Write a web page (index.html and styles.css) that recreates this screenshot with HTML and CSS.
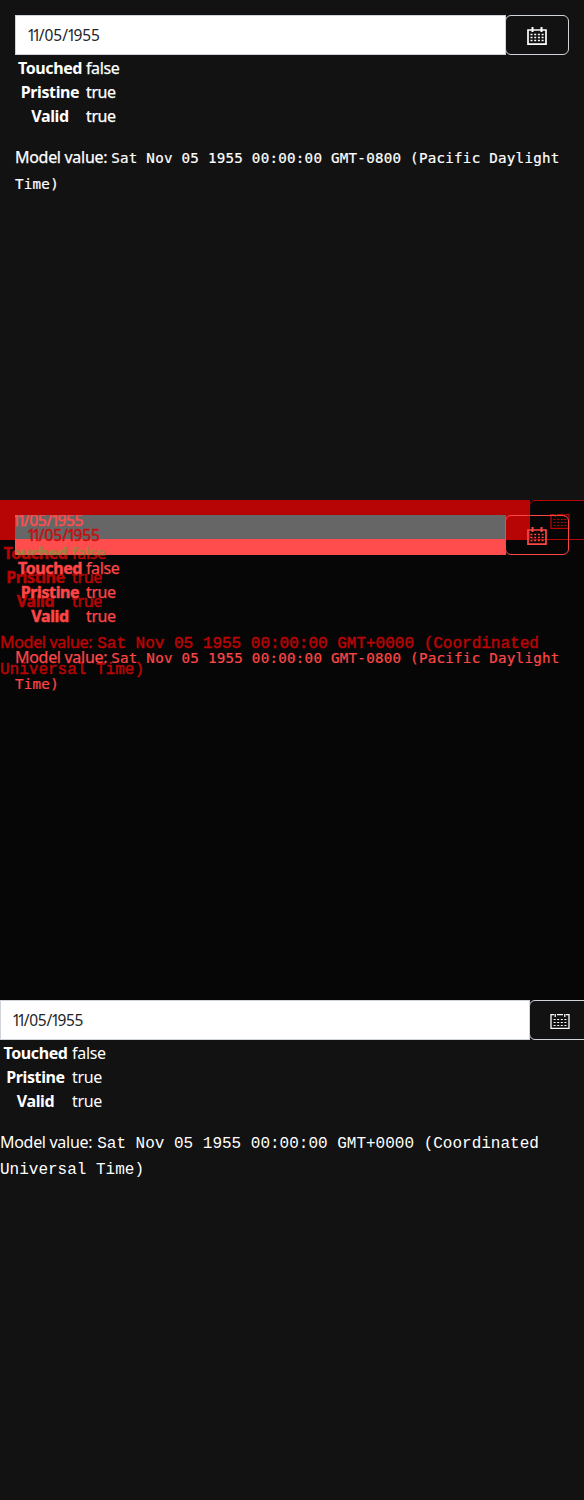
FILE: index.html
```html
<!DOCTYPE html>
<html lang="en">
<head>
<meta charset="utf-8">
<title>Datepicker comparison</title>
<link rel="stylesheet" href="styles.css">
</head>
<body>
<svg class="defs" aria-hidden="true">
  <symbol id="cal-a" viewBox="0 0 20 19">
    <path fill="none" stroke="currentColor" stroke-width="1.7" d="M1 3H19V17.2H1Z"/>
    <path stroke="currentColor" stroke-width="2" d="M5.5 0V5M14.5 0V5"/>
    <path stroke="currentColor" stroke-width="1.4" stroke-dasharray="2 1.7" d="M3.5 7.5H17M3.5 10.5H17M3.5 13.5H17"/>
  </symbol>
  <symbol id="cal-b" viewBox="0 0 20 17">
    <path fill="none" stroke="currentColor" stroke-width="1.3" d="M4 1.6H1V15.4H19V1.6H16M7 1.6H13"/>
    <path stroke="currentColor" stroke-width="1.3" d="M5.2 1V4M14.8 1V4"/>
    <path stroke="currentColor" stroke-width="1.2" stroke-dasharray="2 1.6" d="M3.6 6.5H17M3.6 9.5H17M3.6 12.5H17"/>
  </symbol>
</svg>

<section class="panel">
  <div class="view before">
    <div class="group"><div class="field"><span class="date"><i>11</i>/05/<i>1</i>955</span></div><div class="btn"><svg class="icon-a"><use href="#cal-a"/></svg></div></div>
    <div class="state">
      <div class="row"><b>Touched</b><span>false</span></div>
      <div class="row"><b>Pristine</b><span>true</span></div>
      <div class="row"><b>Valid</b><span>true</span></div>
    </div>
    <p class="model"><span class="label">Model value:</span> <code>Sat Nov 05 1955 00:00:00 GMT-0800 (Pacific Daylight<br>Time)</code></p>
  </div>
</section>

<section class="panel diff">
  <div class="view after removed">
    <div class="group"><div class="field"></div><div class="btn"><svg class="icon-b"><use href="#cal-b"/></svg></div></div>
    <div class="state">
      <div class="row"><b>Touched</b><span>false</span></div>
      <div class="row"><b>Pristine</b><span>true</span></div>
      <div class="row"><b>Valid</b><span>true</span></div>
    </div>
    <p class="model"><span class="label">Model value:</span> <code>Sat Nov 05 1955 00:00:00 GMT+0000 (Coordinated<br>Universal Time)</code></p>
  </div>
  <div class="overlap"><span class="date"><i>11</i>/05/<i>1</i>955</span><div class="row blend" aria-hidden="true"><b>Touched</b><span>false</span></div></div>
  <div class="view before added">
    <div class="group"><div class="field"><span class="date"><i>11</i>/05/<i>1</i>955</span></div><div class="btn"><svg class="icon-a"><use href="#cal-a"/></svg></div></div>
    <div class="state">
      <div class="row"><b>Touched</b><span>false</span></div>
      <div class="row"><b>Pristine</b><span>true</span></div>
      <div class="row"><b>Valid</b><span>true</span></div>
    </div>
    <p class="model"><span class="label">Model value:</span> <code>Sat Nov 05 1955 00:00:00 GMT-0800 (Pacific Daylight<br>Time)</code></p>
  </div>
</section>

<section class="panel">
  <div class="view after">
    <div class="group"><div class="field"><span class="date"><i>11</i>/05/<i>1</i>955</span></div><div class="btn"><svg class="icon-b"><use href="#cal-b"/></svg></div></div>
    <div class="state">
      <div class="row"><b>Touched</b><span>false</span></div>
      <div class="row"><b>Pristine</b><span>true</span></div>
      <div class="row"><b>Valid</b><span>true</span></div>
    </div>
    <p class="model"><span class="label">Model value:</span> <code>Sat Nov 05 1955 00:00:00 GMT+0000 (Coordinated<br>Universal Time)</code></p>
  </div>
</section>
</body>
</html>
```
FILE: styles.css
```css
* { box-sizing: border-box; }
body { margin: 0; background: #121212; color: #fff; font: 16px/24px "Noto Sans", sans-serif; }
.defs { position: absolute; width: 0; height: 0; }
.panel { position: relative; height: 500px; overflow: hidden; background: #121212; }
.before { padding: 15px; }
.group { display: flex; height: 40px; }
.field { width: 491px; flex: none; padding: 7px 12px; background: #fff; color: #212529; border: 1px solid #ced4da; }
.after .field { width: 530px; }
.date { white-space: nowrap; display: block; font-size: 15.5px; }
.date i { font-style: normal; letter-spacing: -3.5px; margin-left: -1px; margin-right: 1px; }
.after .date, .overlap .date { letter-spacing: -.25px; }
.btn { width: 64px; flex: none; margin-left: -1px; border: 1px solid #ced4da; border-radius: 6px; display: flex; justify-content: center; align-items: center; }
.icon-a { width: 20px; height: 19px; margin-top: 2px; }
.icon-b { width: 20px; height: 17px; margin-top: 3px; margin-right: 2px; }
.state { padding: 1px 3px 0; }
.row { display: grid; grid-template-columns: 64px auto; column-gap: 4px; height: 24px; justify-content: start; }
.after .row, .blend { grid-template-columns: 65px auto; }
.row b { text-align: center; letter-spacing: -.4px; white-space: nowrap; }
.row span { letter-spacing: -.4px; }
.after .row span { letter-spacing: -.3px; }
.model { margin: 17px 0 0; line-height: 25.5px; white-space: nowrap; }
.label { display: inline-block; width: 92px; letter-spacing: -.3px; }
.before .label, .before .row span { -webkit-text-stroke: .25px currentColor; }
.model code { font: 14.2px "DejaVu Sans Mono", monospace; letter-spacing: .25px; }
.before .model code { -webkit-text-stroke: .2px currentColor; }
.after .label { width: 93px; }
.after .model code { font: 16px "Liberation Mono", monospace; letter-spacing: 0; }

/* Comparison view: both states laid over one another */
.diff { background: #060606; }
.diff .view { position: absolute; top: 0; left: 0; width: 584px; }
.diff .row, .diff .model, .diff .date { -webkit-text-stroke: .5px currentColor; }
.removed { color: #b70404; }
.removed .field { background: #b70404; border-color: #b70404; }
.removed .btn { border-color: #b70404; }
.overlap { position: absolute; left: 15px; top: 15px; width: 491px; height: 40px; overflow: hidden; background: linear-gradient(#666 24px, #ff4d4d 0); color: #ff4d4d; }
.overlap .date { margin: -7px 0 0 -2px; }
.overlap .blend { margin: 9px 0 0 -12px; color: #a08040; }
.added { color: #ff4646; }
.added .field { background: none; border-color: transparent; color: #c80f0f; }
.added .btn { border-color: #ff4646; }
```
